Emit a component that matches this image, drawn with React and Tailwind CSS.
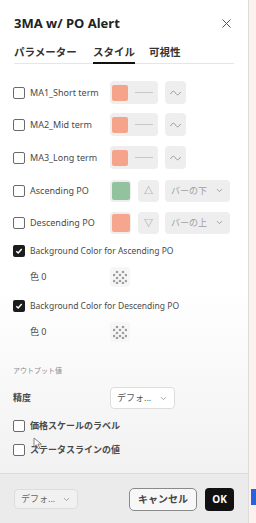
import React from 'react';
import { X, ChevronDown } from 'lucide-react';

const font = 'font-["Noto_Sans","Noto_Sans_CJK_JP",sans-serif]';

const CheckBox = ({ checked }) =>
  checked ? (
    <span className="flex h-[12px] w-[12px] shrink-0 items-center justify-center rounded-[2px] bg-[#1c1c1c]">
      <svg width="8" height="8" viewBox="0 0 8 8">
        <path d="M1.3 4.2 L3.2 6 L6.7 2" fill="none" stroke="#fff" strokeWidth="1.5" />
      </svg>
    </span>
  ) : (
    <span className="h-[12px] w-[12px] shrink-0 rounded-[2px] border-[1.5px] border-[#6a6a6a] bg-white" />
  );

const Wave = () => (
  <svg width="11" height="6" viewBox="0 0 11 6">
    <path d="M0.5 4 C2.5 0.5 4 0.5 5.5 3 C7 5.5 8.5 5.5 10.5 2" fill="none" stroke="#9a9a9a" strokeWidth="1" />
  </svg>
);

const Checker = () => (
  <span className="flex h-[20px] w-[20px] items-center justify-center rounded-[3px] bg-[#f6f6f6]">
    <svg width="14" height="14" viewBox="0 0 14 14">
      {[
        [4, 2], [10, 2], [1, 5], [7, 5], [13, 5], [4, 8], [10, 8], [1, 11], [7, 11], [13, 11], [4, 13], [10, 13],
      ].map(([cx, cy], i) => (
        <circle key={i} cx={cx} cy={cy} r="1.3" fill="#9d9d9d" />
      ))}
    </svg>
  </span>
);

const Select = ({ label, className = '' }) => (
  <span className={`flex items-center justify-between whitespace-nowrap rounded-[4px] px-[6px] ${className}`}>
    <span>{label}</span>
    <ChevronDown size={9} strokeWidth={2} className="text-[#8a8a8a]" />
  </span>
);

const MaRow = ({ label, mt }) => (
  <div className={`flex h-[25px] items-center ${mt}`}>
    <div className="flex w-[97px] items-center gap-[5px]">
      <CheckBox />
      <span className="whitespace-nowrap text-[9px] text-[#4a4a4a]">{label}</span>
    </div>
    <span className="flex h-[23px] w-[48px] items-center rounded-[4px] bg-[#eeeeee] pl-[2px]">
      <span className="h-[16px] w-[16px] rounded-[2px] bg-[#f6a38c]" />
      <span className="ml-[7px] h-px w-[18px] bg-[#c8c8c8]" />
    </span>
    <span className="ml-[7px] flex h-[23px] w-[21px] items-center justify-center rounded-[4px] bg-[#eeeeee]">
      <Wave />
    </span>
  </div>
);

const PoRow = ({ label, color, up, place, mt }) => (
  <div className={`flex h-[25px] items-center ${mt}`}>
    <div className="flex w-[97px] items-center gap-[5px]">
      <CheckBox />
      <span className="whitespace-nowrap text-[9px] text-[#4a4a4a]">{label}</span>
    </div>
    <span className="flex h-[22px] w-[21px] items-center justify-center rounded-[4px] bg-[#eeeeee]">
      <span className={`h-[18px] w-[18px] rounded-[2px] ${color}`} />
    </span>
    <span className="ml-[7px] flex h-[22px] w-[21px] items-center justify-center rounded-[4px] bg-[#eeeeee] text-[9px] text-[#8a8a8a]">
      {up ? '△' : '▽'}
    </span>
    <Select label={place} className="ml-[6px] h-[22px] w-[65px] bg-[#eeeeee] text-[9px] text-[#a0a0a0]" />
  </div>
);

const BgRow = ({ label, mt }) => (
  <div className={`flex h-[16px] items-center gap-[5px] ${mt}`}>
    <CheckBox checked />
    <span className="whitespace-nowrap text-[8.5px] text-[#4a4a4a]">{label}</span>
  </div>
);

const ColorRow = ({ mt }) => (
  <div className={`flex h-[22px] items-center ${mt}`}>
    <span className="w-[97px] pl-[17px] text-[9px] text-[#4a4a4a]">色 0</span>
    <Checker />
  </div>
);

const App = () => {
  return (
    <div className={`flex h-[523px] w-[256px] overflow-hidden bg-[#f3f0ee] ${font}`}>
      <div className="relative flex w-[249px] shrink-0 flex-col border-r border-[#dddddd] bg-linear-to-b from-white from-55% to-[#eeeeee]">
        <div className="flex items-center justify-between pl-[14px] pr-[14px] pt-[15px]">
          <span className="text-[13px] font-bold leading-[16px] text-[#222]">3MA w/ PO Alert</span>
          <X size={15} strokeWidth={1.6} className="text-[#555]" />
        </div>

        <div className="mx-[14px] mt-[14px] flex h-[19px] whitespace-nowrap border-b border-[#e6e6e6] text-[10.5px] font-bold leading-[14px] text-[#333]">
          <span className="w-[79px]">パラメーター</span>
          <span className="-mb-px w-[42px] border-b-2 border-[#111]">スタイル</span>
          <span className="ml-[14px]">可視性</span>
        </div>

        <div className="flex flex-1 flex-col pl-[13px]">
          <MaRow label="MA1_Short term" mt="mt-[16px]" />
          <MaRow label="MA2_Mid term" mt="mt-[7px]" />
          <MaRow label="MA3_Long term" mt="mt-[8px]" />
          <PoRow label="Ascending PO" color="bg-[#93c29f]" up place="バーの下" mt="mt-[8px]" />
          <PoRow label="Descending PO" color="bg-[#f6a68e]" place="バーの上" mt="mt-[7px]" />
          <BgRow label="Background Color for Ascending PO" mt="mt-[8px]" />
          <ColorRow mt="mt-[7px]" />
          <BgRow label="Background Color for Descending PO" mt="mt-[10px]" />
          <ColorRow mt="mt-[7px]" />

          <span className="mt-[22px] h-[12px] text-[7px] leading-[12px] text-[#8a8a8a]">アウトプット値</span>
          <div className="mt-[10px] flex h-[22px] items-center">
            <span className="w-[97px] text-[9px] font-bold text-[#4a4a4a]">精度</span>
            <Select label="デフォ..." className="h-[22px] w-[65px] border border-[#dddddd] bg-white text-[9px] text-[#555]" />
          </div>
          <div className="mt-[9px] flex h-[16px] items-center gap-[5px]">
            <CheckBox />
            <span className="text-[9px] font-bold text-[#4a4a4a]">価格スケールのラベル</span>
          </div>
          <div className="mt-[8px] flex h-[16px] items-center gap-[5px]">
            <CheckBox />
            <span className="text-[9px] font-bold text-[#4a4a4a]">ステータスラインの値</span>
          </div>
        </div>

        <div className="flex h-[50px] shrink-0 items-center border-t border-[#dcdcdc] bg-[#ebebeb] px-[14px] pt-[1px]">
          <Select label="デフォ..." className="h-[20px] w-[64px] border border-[#dddddd] bg-[#f1f1f1] text-[9px] text-[#666]" />
          <span className="ml-auto flex h-[23px] w-[68px] items-center justify-center rounded-[5px] border-[1.5px] border-[#8a8a8a] bg-[#f7f7f7] text-[10px] font-bold text-[#444]">
            キャンセル
          </span>
          <span className="ml-[8px] flex h-[23px] w-[29px] items-center justify-center rounded-[4px] bg-[#111] text-[10px] font-bold text-white">
            OK
          </span>
        </div>

        <svg className="absolute left-[33px] top-[437px]" width="10" height="13" viewBox="0 0 10 13">
          <path d="M1 1 L1 10 L3.4 7.8 L5.2 11.8 L6.8 11.1 L5 7.2 L8.4 7.2 Z" fill="#fff" stroke="#777" strokeWidth="0.9" />
        </svg>
      </div>

      <div className="relative flex-1 bg-[#fcf1ee]">
        <span className="absolute left-[2px] top-[489px] h-[16px] w-[6px] bg-[#2b62d9]" />
      </div>
    </div>
  );
};

export default App;
